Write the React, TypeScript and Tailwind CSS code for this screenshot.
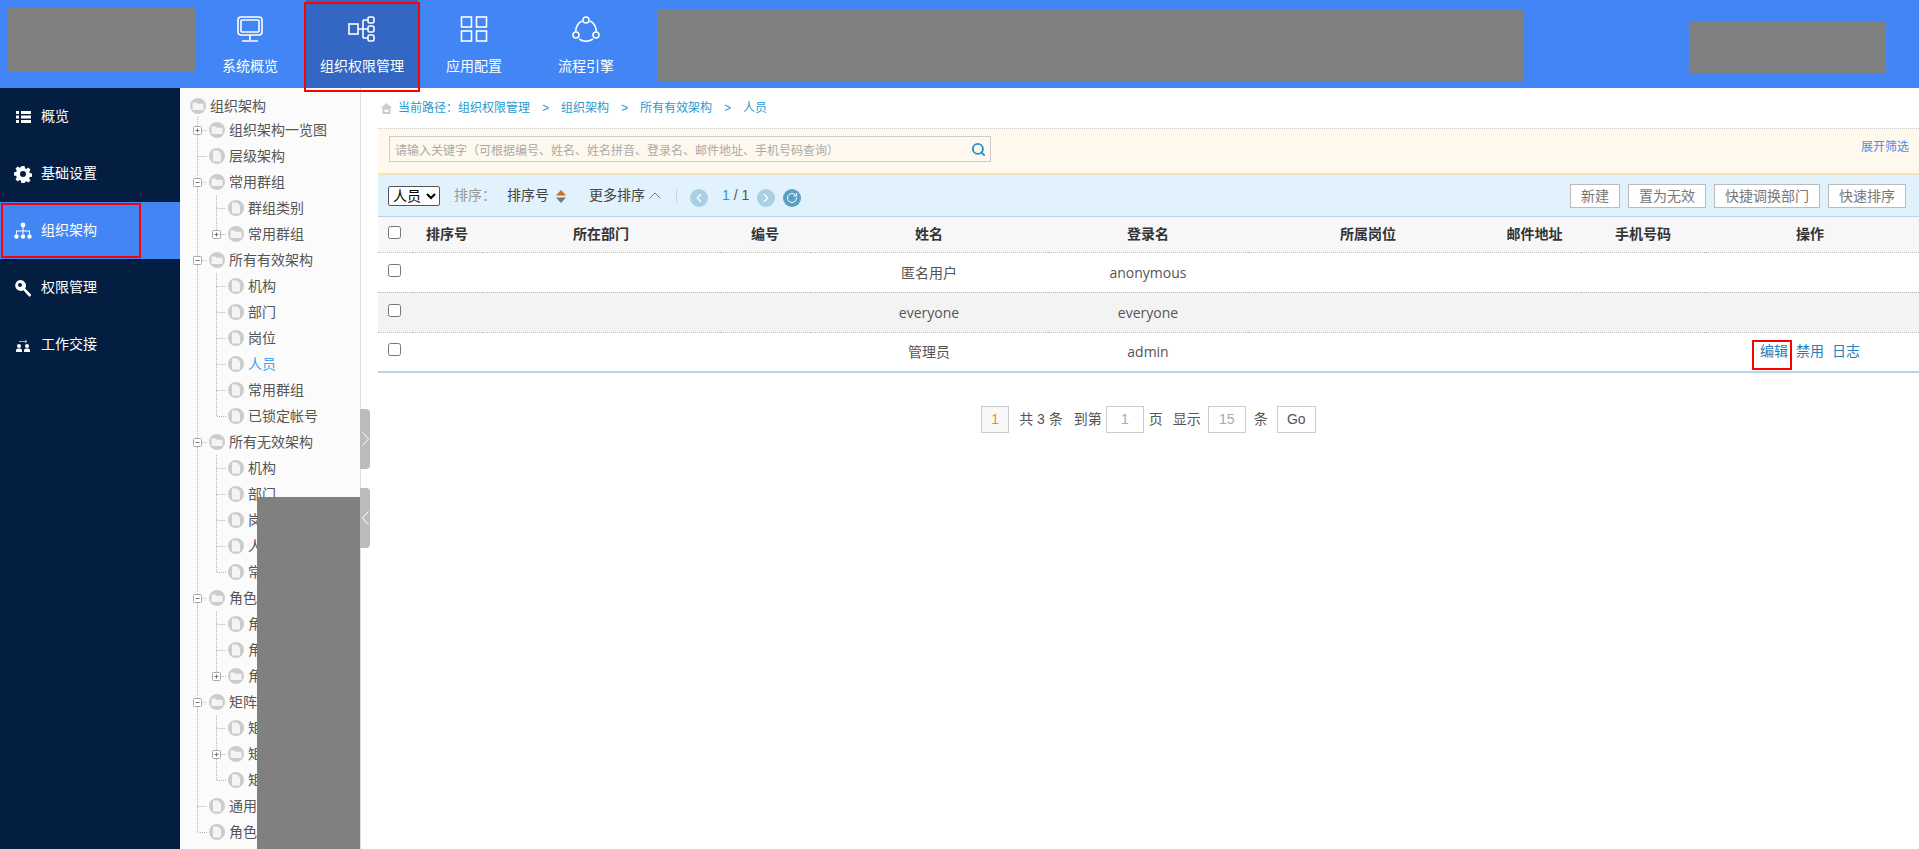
import { Fragment } from 'react'
import { ChevronLeft, ChevronRight, RotateCw, Search } from 'lucide-react'

const topNav = [
  { label: '系统概览', icon: 'monitor' },
  { label: '组织权限管理', icon: 'org', active: true },
  { label: '应用配置', icon: 'grid' },
  { label: '流程引擎', icon: 'flow' },
]

function TopIcon({ name }: { name: string }) {
  return (
    <svg width="28" height="26" viewBox="0 0 28 26" fill="none" stroke="white" strokeWidth="1.6">
      {name === 'monitor' && (
        <>
          <rect x="2" y="1" width="24" height="18" rx="3" />
          <rect x="5" y="4" width="18" height="12" rx="1" />
          <path d="M14 19v5M6 25h16" />
        </>
      )}
      {name === 'org' && (
        <>
          <rect x="1" y="8" width="9" height="10" />
          <rect x="20" y="1" width="6" height="6" rx="1.5" />
          <rect x="20" y="10" width="6" height="6" rx="1.5" />
          <rect x="20" y="19" width="6" height="6" rx="1.5" />
          <path d="M10 13h10M15 4v18M15 4h5M15 22h5" />
        </>
      )}
      {name === 'grid' && (
        <>
          <rect x="1.5" y="1" width="10" height="10" />
          <rect x="16.5" y="1" width="10" height="10" />
          <rect x="1.5" y="15" width="10" height="10" />
          <rect x="16.5" y="15" width="10" height="10" />
        </>
      )}
      {name === 'flow' && (
        <>
          <circle cx="14" cy="4" r="3" />
          <circle cx="4" cy="19" r="3" />
          <circle cx="24" cy="19" r="3" />
          <path d="M10 5C6 7 4 11 3.6 15.5M18 5c4 2 6 6 6.4 10.5M7 23c4 3 10 3 14 0" />
        </>
      )}
    </svg>
  )
}

const sideNav = [
  { label: '概览', icon: 'list' },
  { label: '基础设置', icon: 'gear' },
  { label: '组织架构', icon: 'org', active: true },
  { label: '权限管理', icon: 'key' },
  { label: '工作交接', icon: 'swap' },
]

function SideIcon({ name }: { name: string }) {
  return (
    <svg width="18" height="18" viewBox="0 0 18 18" fill="white">
      {name === 'list' && (
        <path d="M2 3h3v3H2zM7 3h10v3H7zM2 7.5h3v3H2zM7 7.5h10v3H7zM2 12h3v3H2zM7 12h10v3H7z" />
      )}
      {name === 'gear' && (
        <path
          fillRule="evenodd"
          d="M7.4 1h3.2l.4 2.3 1.4.6 1.9-1.3 2.2 2.2-1.3 1.9.6 1.4 2.3.4v3.2l-2.3.4-.6 1.4 1.3 1.9-2.2 2.2-1.9-1.3-1.4.6-.4 2.3H7.4L7 15.7l-1.4-.6-1.9 1.3-2.2-2.2 1.3-1.9-.6-1.4-2.3-.4V7.3L2.2 6.9l.6-1.4-1.3-1.9 2.2-2.2 1.9 1.3L7 2.1zM9 6a3 3 0 1 0 0 6 3 3 0 0 0 0-6z"
        />
      )}
      {name === 'org' && (
        <>
          <circle cx="9" cy="3" r="2.4" />
          <circle cx="2.5" cy="14.5" r="2.2" />
          <circle cx="9" cy="14.5" r="2.2" />
          <circle cx="15.5" cy="14.5" r="2.2" />
          <path d="M8.5 5h1v3.5H16V12h-1V9.5H9.500V12h-1V9.500H3V12H2V8.500h6.500z" />
        </>
      )}
      {name === 'key' && (
        <path
          fillRule="evenodd"
          d="M6.500 1a5.500 5.500 0 0 1 4.600 8.500l5.900 5.900V17l-1.800.8L9.400 11.300A5.500 5.500 0 1 1 6.500 1zm-.5 3a2 2 0 1 0 0 4 2 2 0 0 0 0-4z"
        />
      )}
      {name === 'swap' && (
        <>
          <circle cx="5" cy="10" r="2" />
          <circle cx="13" cy="10" r="2" />
          <path d="M2 16v-1.500c0-1.500 1-2 3-2s3 .5 3 2V16zM10 16v-1.500c0-1.500 1-2 3-2s3 .5 3 2V16z" />
          <path d="M5 5.500h7.500M11 4l2 1.500L11 7" fill="none" stroke="#b9c4d4" strokeWidth="0.9" />
        </>
      )}
    </svg>
  )
}

type Node = { label: string; kind?: 'folder' | 'file'; state?: 'open' | 'closed'; selected?: boolean; children?: Node[] }

const file = (label: string, selected = false): Node => ({ label, kind: 'file', selected })

const tree: Node[] = [
  { label: '组织架构一览图', kind: 'folder', state: 'closed' },
  file('层级架构'),
  {
    label: '常用群组',
    kind: 'folder',
    state: 'open',
    children: [file('群组类别'), { label: '常用群组', kind: 'folder', state: 'closed' }],
  },
  {
    label: '所有有效架构',
    kind: 'folder',
    state: 'open',
    children: [file('机构'), file('部门'), file('岗位'), file('人员', true), file('常用群组'), file('已锁定帐号')],
  },
  {
    label: '所有无效架构',
    kind: 'folder',
    state: 'open',
    children: [file('机构'), file('部门'), file('岗位'), file('人员'), file('常用群组')],
  },
  {
    label: '角色管理',
    kind: 'folder',
    state: 'open',
    children: [file('角色类别'), file('角色列表'), { label: '角色分组', kind: 'folder', state: 'closed' }],
  },
  {
    label: '矩阵管理',
    kind: 'folder',
    state: 'open',
    children: [file('矩阵类别'), { label: '矩阵列表', kind: 'folder', state: 'closed' }, file('矩阵维度')],
  },
  file('通用岗位'),
  file('角色成员'),
]

function NodeIcon({ kind }: { kind?: string }) {
  return (
    <svg width="16" height="16" viewBox="0 0 16 16" className="shrink-0">
      <circle cx="8" cy="8" r="8" fill="#cccccc" />
      {kind === 'folder' ? (
        <path d="M2.500 4.500h4l1 1.200h6v6.300h-11z" fill="#f4f4f4" />
      ) : (
        <path d="M4 2.500h5l3 3v8H4z" fill="#f4f4f4" />
      )}
    </svg>
  )
}

// one indent cell of the tree: dotted guide lines and the +/- box
function Guide({ line, branch, last, state }: { line?: boolean; branch?: boolean; last?: boolean; state?: string }) {
  return (
    <svg width="19" height="26" viewBox="0 0 19 26" className="shrink-0" fill="none">
      {line && <path d="M9.500 0V26" stroke="#b5b5b5" strokeDasharray="1 1" />}
      {branch && <path d={last ? 'M9.500 0V13.500H19' : 'M9.500 0V26M9.500 13.500H19'} stroke="#b5b5b5" strokeDasharray="1 1" />}
      {state && (
        <>
          <rect x="5.500" y="9.500" width="8" height="8" rx="1" fill="white" stroke="#aaaaaa" />
          <path d={state === 'closed' ? 'M7.500 13.500h4M9.500 11.500v4' : 'M7.500 13.500h4'} stroke="#777777" />
        </>
      )}
    </svg>
  )
}

function TreeRows({ nodes, parents }: { nodes: Node[]; parents: boolean[] }) {
  return (
    <>
      {nodes.map((n, i) => {
        const last = i === nodes.length - 1
        return (
          <Fragment key={n.label + i}>
            <div className="flex h-[26px] items-center">
              {parents.map((more, j) => (
                <Guide key={j} line={more} />
              ))}
              <Guide branch last={last} state={n.state} />
              <span className="ml-[2px] mr-[4px]">
                <NodeIcon kind={n.kind} />
              </span>
              <span className={n.selected ? 'text-[#45a5f0]' : 'text-[#555]'}>{n.label}</span>
            </div>
            {n.children && <TreeRows nodes={n.children} parents={[...parents, !last]} />}
          </Fragment>
        )
      })}
    </>
  )
}

const columns = [
  { label: '排序号', w: 'w-[70px]' },
  { label: '所在部门', w: 'w-[238px]' },
  { label: '编号', w: 'w-[90px]' },
  { label: '姓名', w: 'w-[238px]' },
  { label: '登录名', w: 'w-[200px]' },
  { label: '所属岗位', w: 'w-[240px]' },
  { label: '邮件地址', w: 'w-[93px]' },
  { label: '手机号码', w: 'w-[124px]' },
  { label: '操作', w: 'pr-[4px]' },
]

const users = [
  { name: '匿名用户', login: 'anonymous' },
  { name: 'everyone', login: 'everyone' },
  { name: '管理员', login: 'admin', actions: true },
]

function Check() {
  return <input type="checkbox" className="mx-auto block h-[13px] w-[13px] -translate-x-[1px] -translate-y-[2px]" />
}

export default function App() {
  return (
    <div className="relative flex h-[849px] flex-col overflow-hidden bg-white text-[14px] text-[#555] [font-family:'Liberation_Sans','Noto_Sans_CJK_SC',sans-serif]">
      {/* Header */}
      <header className="flex h-[88px] shrink-0 items-start bg-[#4285f4]">
        <div className="ml-[7px] mt-[7px] h-[64px] w-[189px] bg-[#808080]" />
        <nav className="-ml-[2px] flex h-full">
          {topNav.map((item) => (
            <div
              key={item.label}
              className={`relative flex w-[112px] flex-col items-center pt-[16px] text-white ${item.active ? 'bg-[#3367c3]' : ''}`}
            >
              <TopIcon name={item.icon} />
              <span className="mt-[14px] text-[14px] leading-[20px]">{item.label}</span>
              {item.active && <div className="absolute -inset-x-[2px] bottom-[-4px] top-[2px] z-10 border-2 border-[#f00]" />}
            </div>
          ))}
        </nav>
        <div className="ml-[15px] mt-[10px] h-[72px] w-[866px] bg-[#808080]" />
        <div className="ml-[166px] mt-[21px] h-[52px] w-[197px] bg-[#808080]" />
      </header>

      <div className="flex min-h-0 flex-1">
        {/* Side menu */}
        <aside className="w-[180px] shrink-0 bg-[#041e42] text-white">
          {sideNav.map((item) => (
            <div
              key={item.label}
              className={`relative flex h-[57px] items-center pl-[14px] ${item.active ? 'bg-[#4285f4]' : ''}`}
            >
              <SideIcon name={item.icon} />
              <span className="ml-[9px]">{item.label}</span>
              {item.active && <div className="absolute inset-y-[1px] left-[1px] w-[140px] border-2 border-[#f00]" />}
            </div>
          ))}
        </aside>

        {/* Tree */}
        <section className="relative w-[181px] shrink-0 border-r border-[#ddd] bg-[#fbfbfb] pl-[8px] pt-[7px]">
          <div className="flex h-[22px] items-center pl-[2px]">
            <NodeIcon kind="folder" />
            <span className="ml-[4px]">组织架构</span>
          </div>
          <TreeRows nodes={tree} parents={[]} />
          <div className="absolute bottom-0 right-0 top-[409px] w-[103px] bg-[#808080]" />
          <div className="absolute right-[-10px] top-[321px] flex h-[60px] w-[10px] items-center justify-center rounded-r bg-[#bbb]">
            <svg width="7" height="14" viewBox="0 0 7 14" fill="none" stroke="white">
              <path d="M.5.500 6.500 7l-6 6.500" />
            </svg>
          </div>
          <div className="absolute right-[-10px] top-[400px] flex h-[60px] w-[10px] items-center justify-center rounded-r bg-[#bbb]">
            <svg width="7" height="14" viewBox="0 0 7 14" fill="none" stroke="white">
              <path d="M6.500.500.500 7l6 6.500" />
            </svg>
          </div>
        </section>

        {/* Main */}
        <main className="min-w-0 flex-1 pl-[17px]">
          <div className="flex h-[40px] items-center gap-[12px] pl-[3px] text-[12px] text-[#2a9ad0]">
            <span className="flex items-center">
              <svg width="11" height="11" viewBox="0 0 11 11" className="mr-[6px]">
                <path d="M5.500 0 11 5H9.500V11h-8V5H0z" fill="#cccccc" />
                <rect x="3.500" y="6.500" width="4" height="2.500" fill="white" />
              </svg>
              当前路径：组织权限管理
            </span>
            <span>&gt;</span>
            <span>组织架构</span>
            <span>&gt;</span>
            <span>所有有效架构</span>
            <span>&gt;</span>
            <span>人员</span>
          </div>

          {/* Filter */}
          <div className="flex h-[47px] items-start justify-between border-t border-b-2 border-dotted border-t-[#ccc] border-b-[#f5e4b5] bg-[#fef9ec] pl-[11px] pr-[10px] pt-[7px] [border-bottom-style:solid]">
            <div className="flex h-[26px] w-[602px] items-center justify-between border border-[#ccc] pl-[5px] pr-[4px] text-[12px] text-[#aaa]">
              <span className="pt-[3px]">请输入关键字（可根据编号、姓名、姓名拼音、登录名、邮件地址、手机号码查询）</span>
              <Search size={15} strokeWidth={3} className="text-[#1f8fd0]" />
            </div>
            <span className="mt-[2px] text-[12px] text-[#4a8bf0]">展开筛选</span>
          </div>

          {/* Toolbar */}
          <div className="flex h-[42px] items-center justify-between border-b border-[#b8d4ea] bg-[#e1f2fd] pl-[10px] pr-[13px]">
            <div className="flex items-center">
              <select className="h-[20px] w-[52px] rounded-[2px] border border-[#555] bg-white text-[14px] text-black">
                <option>人员</option>
              </select>
              <span className="ml-[14px] text-[#999]">排序：</span>
              <span className="ml-[11px] text-[#444]">排序号</span>
              <svg width="10" height="13" viewBox="0 0 10 13" className="ml-[7px] translate-y-[1px]">
                <path d="M5 0l5 5.500H0z" fill="#d0700a" />
                <path d="M5 13 0 7.500h10z" fill="#777777" />
              </svg>
              <span className="ml-[23px] text-[#444]">更多排序</span>
              <svg width="12" height="7" viewBox="0 0 12 7" fill="none" stroke="#777777" className="ml-[4px]">
                <path d="M.5 6.500 6 1l5.500 5.500" />
              </svg>
              <div className="ml-[15px] h-[14px] w-px bg-[#c8d4dc]" />
              <div className="ml-[13px] flex h-[18px] w-[18px] translate-y-[2px] items-center justify-center rounded-full bg-[#a9cfe4]">
                <ChevronLeft size={14} className="text-white" />
              </div>
              <span className="ml-[14px]">
                <span className="text-[#2a9ad0]">1</span> / 1
              </span>
              <div className="ml-[8px] flex h-[18px] w-[18px] translate-y-[2px] items-center justify-center rounded-full bg-[#a9cfe4]">
                <ChevronRight size={14} className="text-white" />
              </div>
              <div className="ml-[8px] flex h-[18px] w-[18px] translate-y-[2px] items-center justify-center rounded-full bg-[#5aa0c4]">
                <RotateCw size={12} className="text-white" />
              </div>
            </div>
            <div className="flex gap-[8px] text-[#777]">
              {['新建', '置为无效', '快捷调换部门', '快速排序'].map((b) => (
                <button key={b} className="h-[24px] border border-[#bbb] bg-white px-[10px] leading-[22px]">
                  {b}
                </button>
              ))}
            </div>
          </div>

          {/* Table */}
          <table className="w-full table-fixed border-b-2 border-[#b8d4e6]">
            <thead>
              <tr className="h-[35px] border-b border-dotted border-[#bbb] bg-[#f7f7f7] font-bold text-[#333]">
                <th className="w-[34px] font-normal">
                  <Check />
                </th>
                {columns.map((c) => (
                  <th key={c.label} className={`${c.w} font-bold`}>
                    {c.label}
                  </th>
                ))}
              </tr>
            </thead>
            <tbody>
              {users.map((u, i) => (
                <tr
                  key={u.login}
                  className={`h-[40px] border-b border-dotted border-[#bbb] last:border-b-0 ${i === 1 ? 'bg-[#f3f3f3]' : 'bg-white'}`}
                >
                  <td>
                    <Check />
                  </td>
                  <td />
                  <td />
                  <td />
                  <td className="text-center [font-family:'Open_Sans','Noto_Sans_CJK_SC',sans-serif]">{u.name}</td>
                  <td className="text-center [font-family:'Open_Sans','Noto_Sans_CJK_SC',sans-serif]">{u.login}</td>
                  <td />
                  <td />
                  <td />
                  <td className="pr-[4px] text-center text-[#2b7db8]">
                    {u.actions && (
                      <span className="flex justify-center gap-[8px]">
                        <span className="relative">
                          编辑
                          <span className="absolute -bottom-[8px] -left-[8px] -right-[4px] -top-[1px] border-2 border-[#f00]" />
                        </span>
                        <span>禁用</span>
                        <span>日志</span>
                      </span>
                    )}
                  </td>
                </tr>
              ))}
            </tbody>
          </table>

          {/* Pager */}
          <div className="mt-[33px] flex h-[27px] items-center justify-center text-[#555]">
            <span className="flex h-[27px] w-[28px] items-center justify-center border border-[#ccc] bg-[#f8f8f8] text-[#f58a1f]">1</span>
            <span className="ml-[10px]">共 3 条</span>
            <span className="ml-[11px]">到第</span>
            <span className="ml-[4px] flex h-[27px] w-[38px] items-center justify-center border border-[#ccc] text-[#aaa]">1</span>
            <span className="ml-[5px]">页</span>
            <span className="ml-[10px]">显示</span>
            <span className="ml-[7px] flex h-[27px] w-[38px] items-center justify-center border border-[#ccc] text-[#aaa]">15</span>
            <span className="ml-[8px]">条</span>
            <span className="ml-[9px] flex h-[27px] w-[39px] items-center justify-center border border-[#ccc]">Go</span>
          </div>
        </main>
      </div>
    </div>
  )
}
